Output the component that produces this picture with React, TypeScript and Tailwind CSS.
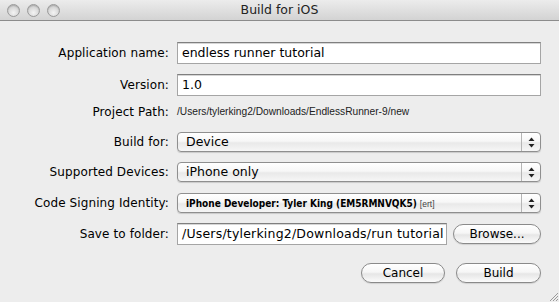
import React from "react";

const font = { fontFamily: '"DejaVu Sans", "Liberation Sans", sans-serif' };

function Light() {
  return (
    <div className="w-[13px] h-[13px] rounded-full border border-[#9a9a9a] bg-[radial-gradient(circle_at_50%_70%,#f4f4f4_0%,#d8d8d8_55%,#bdbdbd_100%)] shadow-[inset_0_1px_1px_rgba(0,0,0,0.15)]" />
  );
}

function Label({ children }: { children: React.ReactNode }) {
  return (
    <div className="w-[170px] shrink-0 text-right pr-[1px] text-[12px] text-black tracking-[0.1px]">
      {children}
    </div>
  );
}

function Field({ value, w, track }: { value: string; w?: string; track?: string }) {
  return (
    <div
      className={`${w ?? "w-[364px]"} ${track ?? ""} h-[22px] ml-[7px] bg-white border border-[#a5a5a5] border-t-[#7f7f7f] shadow-[inset_0_1px_0_#d6d6d6] flex items-center pl-[4px] text-[12.5px] text-black overflow-hidden whitespace-nowrap`}
    >
      {value}
    </div>
  );
}

function Arrows() {
  return (
    <svg width="7" height="11" viewBox="0 0 7 11">
      <path d="M3.5 0.5 L6.5 4 L0.5 4 Z" fill="#222" />
      <path d="M3.5 10.5 L6.5 7 L0.5 7 Z" fill="#222" />
    </svg>
  );
}

function Select({ children }: { children: React.ReactNode }) {
  return (
    <div className="w-[364px] h-[20px] ml-[7px] rounded-[4px] border border-[#8f8f8f] bg-[linear-gradient(#ffffff_0%,#f7f7f7_45%,#e9e9e9_55%,#f6f6f6_100%)] shadow-[0_1px_1px_rgba(0,0,0,0.15)] flex items-stretch">
      <div className="flex-1 flex items-center pl-[8px] overflow-hidden whitespace-nowrap">{children}</div>
      <div className="w-[19px] border-l border-[#b5b5b5] flex items-center justify-center">
        <Arrows />
      </div>
    </div>
  );
}

function Button({ children, w }: { children: React.ReactNode; w: string }) {
  return (
    <div
      className={`${w} h-[20px] rounded-full border border-[#8a8a8a] bg-[linear-gradient(#ffffff_0%,#f6f6f6_45%,#e6e6e6_55%,#fbfbfb_100%)] shadow-[0_1px_1px_rgba(0,0,0,0.12)] flex items-center justify-center text-[12px] text-black`}
    >
      {children}
    </div>
  );
}

export default function App() {
  return (
    <div style={font} className="w-[559px] h-[302px] bg-[#ededed] flex flex-col overflow-hidden relative">
      <div className="h-[21px] shrink-0 bg-[linear-gradient(#ececec,#d3d3d3)] border-b border-[#8c8c8c] flex items-center relative">
        <div className="flex gap-[7px] pl-[7px]">
          <Light />
          <Light />
          <Light />
        </div>
        <div className="absolute inset-0 flex items-center justify-center text-[12.5px] text-[#222]">Build for iOS</div>
      </div>

      <div className="flex flex-col pt-[21px]">
        <div className="flex items-center h-[22px]">
          <Label>Application name:</Label>
          <Field value="endless runner tutorial" />
        </div>
        <div className="flex items-center h-[22px] mt-[10px]">
          <Label>Version:</Label>
          <Field value="1.0" />
        </div>
        <div className="flex items-center h-[16px] mt-[8px]">
          <Label>Project Path:</Label>
          <div
            className="ml-[7px] text-[10.2px] text-[#222]"
            style={{ fontFamily: '"Liberation Sans", Arial, sans-serif' }}
          >
            /Users/tylerking2/Downloads/EndlessRunner-9/new
          </div>
        </div>
        <div className="flex items-center h-[20px] mt-[12px]">
          <Label>Build for:</Label>
          <Select>
            <span className="text-[12.5px] text-black">Device</span>
          </Select>
        </div>
        <div className="flex items-center h-[20px] mt-[10px]">
          <Label>Supported Devices:</Label>
          <Select>
            <span className="text-[12.5px] text-black">iPhone only</span>
          </Select>
        </div>
        <div className="flex items-center h-[20px] mt-[11px]">
          <Label>Code Signing Identity:</Label>
          <Select>
            <div className="flex items-baseline">
              <span
                className="text-[10px] font-bold text-black"
                style={{ fontFamily: '"DejaVu Sans Condensed", "DejaVu Sans", sans-serif', fontStretch: "condensed" }}
              >
                iPhone Developer: Tyler King (EM5RMNVQK5)
              </span>
              <span
                className="text-[8.5px] text-[#444] ml-[3px]"
                style={{ fontFamily: '"Liberation Sans", Arial, sans-serif' }}
              >
                [ert]
              </span>
            </div>
          </Select>
        </div>
        <div className="flex items-center h-[22px] mt-[10px]">
          <Label>Save to folder:</Label>
          <Field value="/Users/tylerking2/Downloads/run tutorial" w="w-[270px]" track="tracking-[0.2px]" />
          <div className="ml-[6px]">
            <Button w="w-[88px] h-[18px]">Browse...</Button>
          </div>
        </div>
        <div className="flex items-center justify-end h-[20px] mt-[18px] pr-[18px] gap-[11px]">
          <Button w="w-[84px]">Cancel</Button>
          <Button w="w-[85px]">Build</Button>
        </div>
      </div>

      <svg className="absolute right-0 bottom-0" width="11" height="11" viewBox="0 0 11 11">
        <path d="M10 2 L2 10 M10 5 L5 10 M10 8 L8 10" stroke="#9a9a9a" strokeWidth="1" />
      </svg>
    </div>
  );
}
